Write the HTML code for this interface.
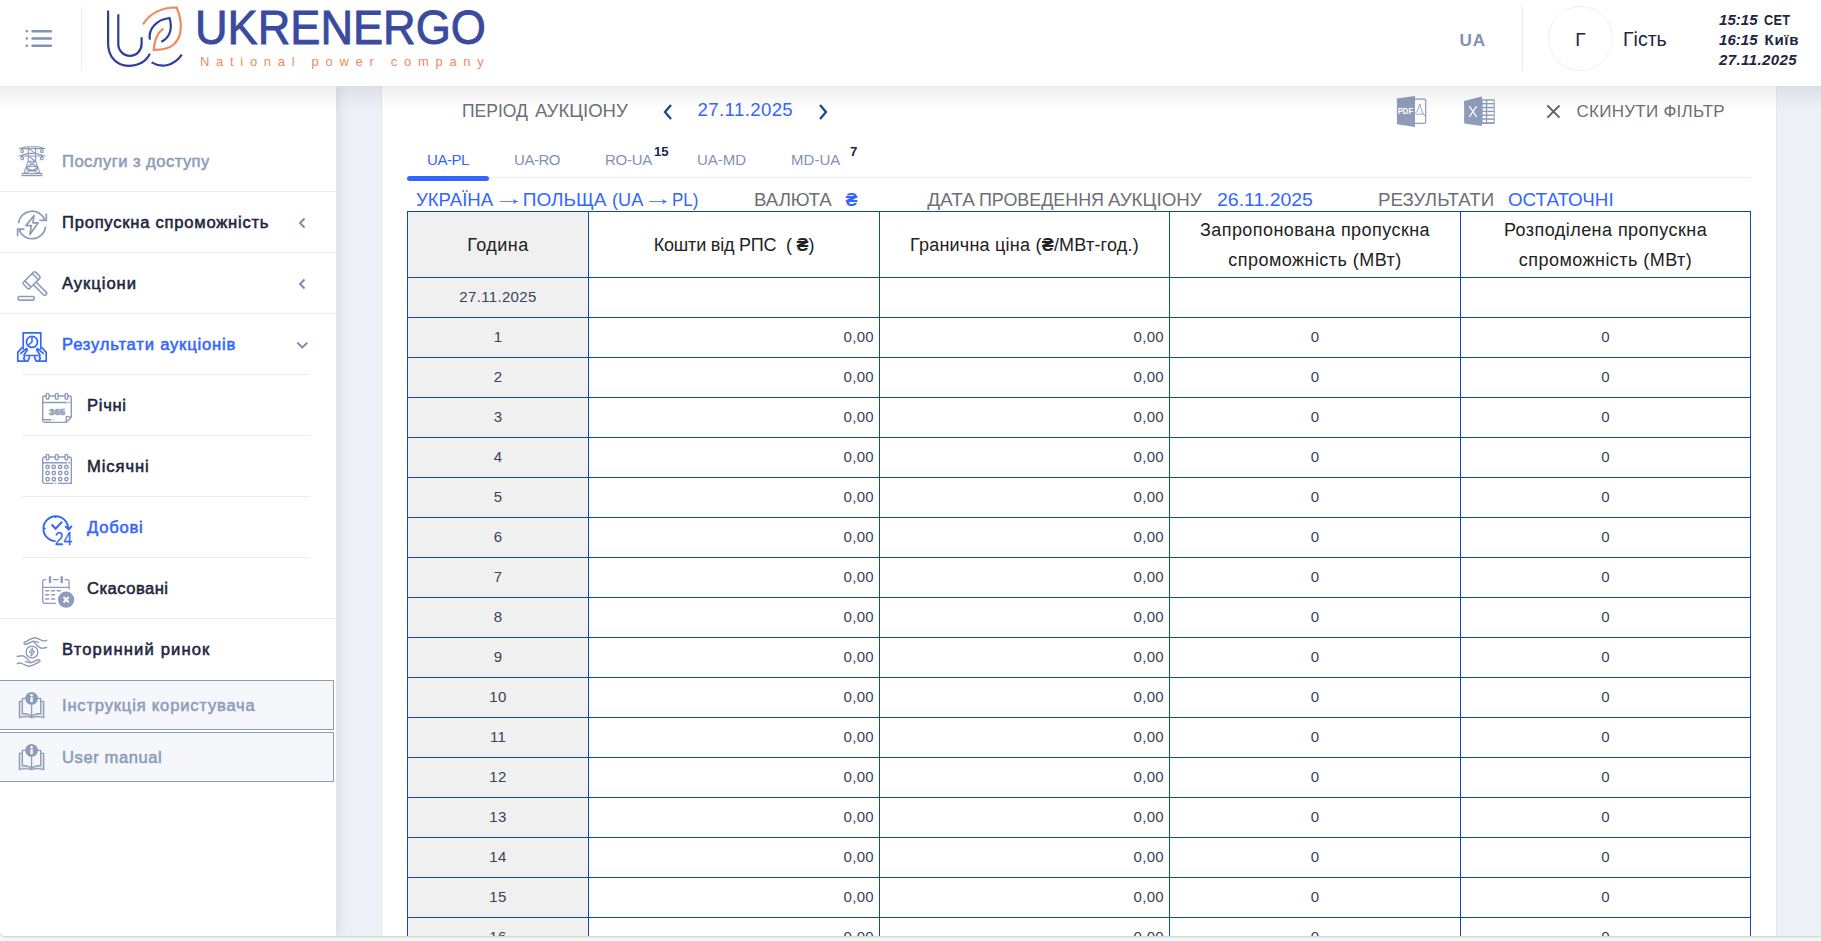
<!DOCTYPE html>
<html lang="uk">
<head>
<meta charset="utf-8">
<title>Результати аукціонів</title>
<style>
*{box-sizing:border-box;margin:0;padding:0}
html,body{width:1821px;height:941px;overflow:hidden}
body{background:#f5f5f5;font-family:"Liberation Sans",sans-serif;color:#1e2640;position:relative}
.abs{position:absolute;white-space:nowrap}
/* header */
.header{position:absolute;left:0;top:0;width:1821px;height:86px;background:#fff;z-index:5;box-shadow:none}
.hsep{position:absolute;width:1px;background:#e9ecf4}
.brand{position:absolute;left:195px;top:0px;font-size:49px;line-height:54px;color:#3a4a9f;letter-spacing:0;-webkit-text-stroke:.9px #3a4a9f;transform:scaleX(.921);transform-origin:0 0}
.brand2{position:absolute;left:200px;top:54px;font-size:13px;line-height:16px;color:#f08a5d;letter-spacing:6.7px}
.lang{position:absolute;left:1459.6px;top:29px;font-size:17.2px;line-height:22px;font-weight:bold;color:#8392b3;letter-spacing:.7px}
.avatar{position:absolute;left:1548px;top:6px;width:65px;height:65px;border-radius:50%;border:1px solid #edf0f8;text-align:center;line-height:65px;font-size:19px;color:#1e2640}
.guest{position:absolute;left:1623px;top:27px;font-size:19.5px;line-height:24px;color:#1e2640}
.clock{position:absolute;left:1719px;font-size:15px;line-height:18px;font-weight:bold;color:#1e2640;letter-spacing:.35px;margin-top:1px}
.clock i{font-style:italic;letter-spacing:.05px;margin-right:-.5px}
/* sidebar */
.sidebar{position:absolute;left:0;top:86px;width:336px;height:850px;background:#fff;z-index:3;box-shadow:3px 0 10px rgba(40,50,80,.10)}
.mi{position:absolute;left:62px;font-size:16.6px;line-height:22px;font-weight:normal;-webkit-text-stroke:.55px currentColor;letter-spacing:.75px;color:#1e2640;white-space:nowrap;margin-top:1px}
.mi.sub{left:87px}
.mi.muted{color:#8e9cba}
.mi.blue{color:#3366ff}
.sep{position:absolute;height:1px;background:#e9edf5}
.box{position:absolute;left:-1px;width:335px;height:50px;background:#f5f7fa;border:1px solid #8e9cba}
.ico{position:absolute;overflow:visible}
/* card */
.card{position:absolute;left:381px;top:86px;width:1396px;height:850px;background:#fff;border-left:1px solid #e3e7f1;border-right:1px solid #e3e7f1;z-index:1}
.topshadow{position:absolute;left:0;top:86px;width:1821px;height:26px;z-index:4;background:linear-gradient(to bottom,rgba(45,50,65,.09),rgba(45,50,65,.03) 55%,rgba(45,50,65,0));pointer-events:none}
.flt{position:absolute;font-size:18.6px;line-height:24px;color:#6d6f76;white-space:nowrap}
.tab{position:absolute;top:150px;font-size:15px;line-height:20px;color:#8392b3;white-space:nowrap}
.badge{position:absolute;font-size:13.2px;line-height:14px;font-weight:bold;color:#1e2640}
.info{position:absolute;top:188px;font-size:19px;line-height:24px;color:#6d6f76;white-space:nowrap;transform-origin:0 50%}
.info.b{color:#3366ff}
table.t{position:absolute;left:407px;top:211px;border-collapse:collapse;table-layout:fixed;width:1344px;z-index:2}
table.t td,table.t th{border:1px solid #0c4aad;height:40px;font-size:15px;letter-spacing:.33px;color:#3a4256;font-weight:normal;text-align:center;vertical-align:middle;padding:0}
table.t th{height:66px;font-size:18px;letter-spacing:.45px;line-height:30px;color:#222}
table.t td{padding-bottom:1.5px}
table.t td.r{text-align:right;padding-right:5px}
table.t .g{background:#f0f0f0}
#page{position:absolute;left:0;top:0;width:1821px;height:936px;overflow:hidden;background:#edf0f7;border-radius:0 0 2px 5px;box-shadow:0 .5px 2px rgba(0,0,0,.17)}
</style>
</head>
<body>
<div id="page">
<div class="header">
  <svg class="ico" style="left:24px;top:28px" width="30" height="22" viewBox="0 0 30 22"><g stroke="#8392b3" stroke-width="2.6" stroke-linecap="round" fill="none"><path d="M2.8 3.2h.1M8.6 3.2h18.2M2.8 10.5h.1M8.6 10.5h18.2M2.8 17.8h.1M8.6 17.8h18.2"/></g></svg>
  <div class="hsep" style="left:81px;top:7px;height:63px"></div>
  <svg class="ico" style="left:100px;top:0" width="90" height="76" viewBox="100 0 90 76" fill="none" stroke-width="2.2" stroke-linecap="butt">
    <path d="M108.1 10.4V43.500C108.1 56.500 116.500 65.800 128.400 65.800C138 65.800 146 61.500 149.900 53.800" stroke="#2f3f99"/>
    <path d="M118.3 14.3V44a11.6 11.8 0 0 0 23.3 0V37.3" stroke="#2f3f99"/>
    <path d="M151.6 62.4c10 6 22.5 3.6 30.2-7.7" stroke="#2f3f99"/>
    <path d="M149.9 39.6c-2-10.5 6.5-20 19.6-21.6c2.6 8.5 2 19-8.2 23.8" stroke="#2f3f99"/>
    <path d="M142.9 24.3c7-10.5 19-17 33.8-16.8c5 12 7 28-3 37c-5.5 4.6-12.5 5.6-20 5.4c.5-8 3-16.500 9.600-21.3" stroke="#f08a5d"/>
  </svg>
  <div class="brand">UKRENERGO</div>
  <div class="brand2">National power company</div>
  <div class="lang">UA</div>
  <div class="hsep" style="left:1522px;top:6px;height:65px"></div>
  <div class="avatar">Г</div>
  <div class="guest">Гість</div>
  <div class="clock" style="top:10px"><i>15:15</i>&nbsp; <span style="display:inline-block;transform:scaleX(.85);transform-origin:0 50%;margin-left:-1.7px">CET</span></div>
  <div class="clock" style="top:30px"><i>16:15</i>&nbsp; <span style="letter-spacing:.75px;margin-left:-1.700px">Київ</span></div>
  <div class="clock" style="top:50px"><i style="letter-spacing:.4px">27.11.2025</i></div>
</div>
<div class="topshadow"></div>

<div class="sidebar" id="sidebar">
<div class="mi muted" style="top:64px;letter-spacing:0.45px">Послуги з доступу</div>
<div class="mi" style="top:125px;letter-spacing:0.75px">Пропускна спроможність</div>
<div class="mi" style="top:186px;letter-spacing:0.95px">Аукціони</div>
<div class="mi blue" style="top:247px;letter-spacing:0.8px">Результати аукціонів</div>
<div class="mi sub" style="top:308px;letter-spacing:0.7px">Річні</div>
<div class="mi sub" style="top:369px;letter-spacing:0.9px">Місячні</div>
<div class="mi sub blue" style="top:430px;letter-spacing:0.75px">Добові</div>
<div class="mi sub" style="top:491px;letter-spacing:0.47px">Скасовані</div>
<div class="mi" style="top:552px;letter-spacing:1.15px">Вторинний ринок</div>
<div class="sep" style="left:0;top:105px;width:336px"></div>
<div class="sep" style="left:0;top:166px;width:336px"></div>
<div class="sep" style="left:0;top:227px;width:336px"></div>
<div class="sep" style="left:22px;top:288px;width:288px"></div>
<div class="sep" style="left:22px;top:349px;width:288px"></div>
<div class="sep" style="left:22px;top:410px;width:288px"></div>
<div class="sep" style="left:22px;top:471px;width:288px"></div>
<div class="sep" style="left:0;top:532px;width:336px"></div>
<div class="box" style="top:594px"></div>
<div class="box" style="top:646px"></div>
<div class="mi muted" style="top:608px;letter-spacing:.8px">Інструкція користувача</div>
<div class="mi muted" style="top:660px;letter-spacing:.57px">User manual</div>
<svg class="ico" style="left:296px;top:130.6px" width="12" height="12" viewBox="0 0 12 12"><path d="M8.5 1.500L4 6l4.500 4.500" fill="none" stroke="#7587ad" stroke-width="1.800"/></svg>
<svg class="ico" style="left:296px;top:191.6px" width="12" height="12" viewBox="0 0 12 12"><path d="M8.5 1.500L4 6l4.500 4.500" fill="none" stroke="#7587ad" stroke-width="1.800"/></svg>
<svg class="ico" style="left:296px;top:253px" width="13" height="12" viewBox="0 0 13 12"><path d="M1.300 3.700L6.300 8.500l5-4.800" fill="none" stroke="#7587ad" stroke-width="1.800"/></svg>
<!--ICONS--><!--/ICONS-->
</div>

<!--SIDEICONS--><svg class="ico" style="left:0;top:0;z-index:4" width="336" height="941" viewBox="0 0 336 941"><g fill="none" stroke="#8e9cba" stroke-width="1.1" stroke-linejoin="round">
<path d="M26.5 146.7H38.4M28.2 146.7V161.3L23.8 173.6M35.6 146.7V161.3L40.2 173.6"/>
<path d="M26.5 146.8L19.7 148.6H44.8L38.4 146.800M28.2 153.400L19.2 156H44.8L35.6 153.400"/>
<path d="M22.2 148.6V150M41.8 148.6V150M22.2 156V157.400M41.8 156V157.400"/>
<rect x="21" y="150" width="2.400" height="2.400" rx=".7"/><rect x="40.6" y="150" width="2.400" height="2.400" rx=".7"/>
<rect x="21" y="157.4" width="2.400" height="2.400" rx=".7"/><rect x="40.6" y="157.4" width="2.400" height="2.400" rx=".7"/>
<path d="M28.2 148.6L35.6 153.400H28.2M28.200 156L35.6 161.300H28.200M28.200 161.300L38.4 167.800M35.6 161.300L25.8 167.800M25.8 167.800Q32 164.600 38.400 167.800M25.800 167.800L40 173.400M38.400 167.800L24 173.400M26.500 169.500Q32 172.500 37.600 169.500"/>
<rect x="22.2" y="173.6" width="19.600" height="2" />
</g>
<g fill="none" stroke="#8e9cba" stroke-width="1.7" stroke-linejoin="miter">
<path d="M18.400 223.300A13.700 13.700 0 0 1 44.900 220.300"/>
<path d="M46.3 213.5V220.400H39.200"/>
<path d="M45.600 226.600A13.700 13.700 0 0 1 18.900 229.100"/>
<path d="M17.600 236.200V229.200H24.500"/>
<path d="M34.100 215.600L25.800 225.600H31.300L29.900 234.500L38.200 222.800H32.900Z" stroke-linejoin="round"/>
</g>
<g fill="none" stroke="#8e9cba" stroke-width="1.6">
<g transform="translate(31.600 280.300) rotate(-45)"><rect x="-8.600" y="-4.400" width="17.200" height="8.800" rx="1.800"/><path d="M-5.200 -4.400V4.400M5.200 -4.400V4.400"/></g>
<g transform="translate(34.700 283.400) rotate(45)"><path d="M0 -1.900H14.200A1.900 1.900 0 0 1 14.200 1.900H0"/></g>
<rect x="18.100" y="296.500" width="16.100" height="3.600" rx="1"/>
</g>
<g fill="none" stroke="#3366ff" stroke-width="1.7" stroke-linejoin="round" stroke-linecap="round">
<path d="M23.200 349.500V332.800H40.800V349.500M25.500 355.500H38.500" stroke-linecap="butt"/>
<circle cx="32" cy="341.900" r="5.500"/>
<path d="M32 337.800V341.900L28.900 344.800" stroke-width="1.500"/>
<path d="M22.400 347.200L17.800 352.400V361.200H27.800L29.800 356.400" stroke-linecap="butt"/>
<path d="M20.800 353.400L26 348.900Q27.200 348.300 27.300 349.800L24 355L24.600 356.800L23.600 358.400L24.800 360"/>
<path d="M41.600 347.200L46.200 352.400V361.200H36.200L34.200 356.400" stroke-linecap="butt"/>
<path d="M43.200 353.400L38 348.900Q36.800 348.300 36.700 349.800L40 355L39.400 356.800L40.400 358.400L39.200 360"/>
</g>
<g fill="none" stroke="#8e9cba" stroke-width="1.4" stroke-linejoin="round">
<path d="M44.500 396H69.500A1.800 1.800 0 0 1 71.300 397.800V417.300L66.200 422.400H44.500A1.800 1.800 0 0 1 42.700 420.600V397.800A1.800 1.800 0 0 1 44.500 396Z"/>
<path d="M43 402.500H67M68.200 402.500H69.800M66.200 422.400V417.600Q66.200 416.400 67.400 416.400L71.300 417.300M43 419.600H51.500M53.300 419.600H54"/>
<path d="M43.400 421.100H51" stroke="#c9cfde" stroke-width="1.600"/>
<g fill="#fff"><rect x="46.200" y="393.400" width="2.800" height="6" rx="1.400"/><rect x="55.400" y="393.400" width="2.800" height="6" rx="1.400"/><rect x="65" y="393.400" width="2.800" height="6" rx="1.400"/></g>
</g>
<text x="57.100" y="414.600" text-anchor="middle" font-family="Liberation Sans,sans-serif" font-weight="bold" font-size="9.2" fill="#8e9cba" stroke="#8e9cba" stroke-width=".55" textLength="16.200" lengthAdjust="spacingAndGlyphs">365</text>
<g fill="none" stroke="#8e9cba" stroke-width="1.400" stroke-linejoin="round">
<path d="M58 483.400H71.300V458.800A1.800 1.800 0 0 0 69.500 457H44.500A1.800 1.800 0 0 0 42.700 458.800V481.600A1.800 1.800 0 0 0 44.500 483.400H53.500M55 483.400H56.500"/>
<path d="M43 462.800H67M68.200 462.800H69.800"/>
<g fill="#fff"><rect x="46.200" y="454.400" width="2.800" height="5.600" rx="1.400"/><rect x="55.400" y="454.400" width="2.800" height="5.600" rx="1.400"/><rect x="65" y="454.400" width="2.800" height="5.600" rx="1.400"/></g>
<g stroke-width="1.450"><circle cx="47.6" cy="466.9" r="1.700"/><circle cx="53.8" cy="466.9" r="1.700"/><circle cx="60.2" cy="466.9" r="1.700"/><circle cx="66.4" cy="466.9" r="1.700"/><circle cx="47.6" cy="473" r="1.700"/><circle cx="53.8" cy="473" r="1.700"/><circle cx="60.2" cy="473" r="1.700"/><circle cx="66.4" cy="473" r="1.700"/><circle cx="47.6" cy="479.2" r="1.700"/><circle cx="53.8" cy="479.2" r="1.700"/><circle cx="60.2" cy="479.2" r="1.700"/><circle cx="66.4" cy="479.2" r="1.700"/></g>
</g>
<g fill="none" stroke="#3366ff" stroke-width="1.900" stroke-linecap="butt">
<path d="M55.600 541.100A12.400 12.400 0 1 1 68.200 528.500"/>
<path d="M65.200 526.200L68.600 529.600L71.800 526" />
<path d="M55.500 516.500V518M43.200 528.500H45.800" stroke-width="1.500"/>
<path d="M51.600 524.500L55.600 528.800L62.200 521.600" stroke-width="2.100"/>
</g>
<text x="54.700" y="544.600" font-family="Liberation Sans,sans-serif" font-size="18.2" fill="#3366ff" stroke="#3366ff" stroke-width=".25" textLength="17.400" lengthAdjust="spacingAndGlyphs">24</text>
<g fill="none" stroke="#8e9cba" stroke-width="1.300" stroke-linecap="round">
<path d="M45.600 579.700H44.800A2.100 2.100 0 0 0 42.700 581.800V601.200A2.100 2.100 0 0 0 44.800 603.300H55.800M53.500 579.700H58.200M65.200 579.700H67A2.100 2.100 0 0 1 69.100 581.800V589.200M42.700 587.400H69.100"/>
<path d="M50 577.300V582M61.700 577.300V582" stroke-width="2.400"/>
<path d="M45.600 590.700H48.600M51.500 590.700H54.600M57.200 590.700H60.300M45.600 594.800H48.600M51.500 594.800H54.600M45.600 599H48.600M51.500 599H54.600" stroke-width="1.400"/>
</g>
<circle cx="66.100" cy="599.700" r="8.100" fill="#8e9cba"/>
<path d="M63.500 597L68.700 602.400M68.700 597L63.500 602.400" stroke="#fff" stroke-width="2" fill="none"/>
<g fill="none" stroke="#8e9cba" stroke-width="1.400" stroke-linecap="round" stroke-linejoin="round">
<path d="M46.700 640.300C45.500 641 44.500 641.200 43.300 640.900C40 639.800 37.500 637.700 35 637.700C32 637.700 28 640.500 24.800 642C23.700 642.600 23.800 643.800 24.600 644.200C25.300 644.500 26 644.200 26.500 644L33.300 641.100L38.600 642.400M33.300 641.400C35 643 36.500 645 38 646.200C39.500 647.500 40.500 648.200 41.800 648.200C43.500 648.200 45 647.900 46.700 647.500"/><g transform="rotate(180 32 652)"><path d="M46.700 640.300C45.500 641 44.500 641.200 43.300 640.900C40 639.800 37.500 637.700 35 637.700C32 637.700 28 640.500 24.800 642C23.700 642.600 23.800 643.800 24.600 644.200C25.300 644.500 26 644.200 26.500 644L33.300 641.100L38.600 642.400M33.300 641.400C35 643 36.500 645 38 646.200C39.500 647.500 40.500 648.200 41.800 648.200C43.500 648.200 45 647.900 46.700 647.500"/></g>
<circle cx="32" cy="652" r="5.900"/>
<path d="M32.600 648L29.200 652.300H31.700L31 656.200L34.600 651.400H32.200Z" stroke-width="1.100"/>
</g>
<g transform="translate(0 0)"><path d="M19.400 701.400H22.400V713.500C26 713.700 29.500 714.400 31.600 716.200C33.700 714.400 37.200 713.700 40.700 713.500V701.400H43.700V717.700C39.500 716.300 35.500 716.200 31.600 717.700C27.700 716.200 23.700 716.300 19.400 717.700Z" fill="#dde1ea" stroke="none"/>
<g fill="none" stroke="#8e9cba" stroke-width="1.300" stroke-linejoin="round"><path d="M26 698.400H22.400V713.500C26 713.700 29.500 714.400 31.600 716.200C33.700 714.400 37.200 713.700 40.700 713.500V698.400H37.200M31.600 704.500V717"/>
<path d="M22.400 701.400H19.400V717.700C23.700 716.300 27.700 716.200 31.600 717.700C35.500 716.200 39.500 716.300 43.700 717.700V701.400H40.700"/></g>
<circle cx="31.600" cy="698.400" r="6.400" fill="#8e9cba"/>
<circle cx="31.600" cy="695.200" r="1.250" fill="#fff"/><rect x="30.450" y="697.300" width="2.300" height="4.800" fill="#fff"/></g>
<g transform="translate(0 52)"><path d="M19.400 701.400H22.400V713.500C26 713.700 29.500 714.400 31.600 716.200C33.700 714.400 37.200 713.700 40.700 713.500V701.400H43.700V717.700C39.500 716.300 35.500 716.200 31.600 717.700C27.700 716.200 23.700 716.300 19.400 717.700Z" fill="#dde1ea" stroke="none"/>
<g fill="none" stroke="#8e9cba" stroke-width="1.300" stroke-linejoin="round"><path d="M26 698.400H22.400V713.500C26 713.700 29.500 714.400 31.600 716.200C33.700 714.400 37.200 713.700 40.700 713.500V698.400H37.200M31.600 704.500V717"/>
<path d="M22.400 701.400H19.400V717.700C23.700 716.300 27.700 716.200 31.600 717.700C35.500 716.200 39.500 716.300 43.700 717.700V701.400H40.700"/></g>
<circle cx="31.600" cy="698.400" r="6.400" fill="#8e9cba"/>
<circle cx="31.600" cy="695.200" r="1.250" fill="#fff"/><rect x="30.450" y="697.300" width="2.300" height="4.800" fill="#fff"/></g></svg><!--/SIDEICONS-->
<div class="card"></div>
<div id="main" style="position:absolute;left:0;top:0;z-index:2">
<div class="flt" style="left:461.8px;top:98.6px;transform:scaleX(.94);transform-origin:0 50%">ПЕРІОД</div>
<div class="flt" style="left:535px;top:98.6px;transform:scaleX(1.0);transform-origin:0 50%">АУКЦІОНУ</div>
<div class="flt" style="left:697.6px;top:97.7px;color:#3366ff;letter-spacing:.38px">27.11.2025</div>
<svg class="ico" style="left:661px;top:103px" width="14" height="18" viewBox="0 0 14 18"><path d="M10 2L4 9l6 7" fill="none" stroke="#0f4a9c" stroke-width="2.300"/></svg>
<svg class="ico" style="left:816px;top:103px" width="14" height="18" viewBox="0 0 14 18"><path d="M4 2l6 7l-6 7" fill="none" stroke="#0f4a9c" stroke-width="2.300"/></svg>
<svg class="ico" style="left:1546px;top:104px" width="15" height="15" viewBox="0 0 15 15"><path d="M1.400 1.500l12.100 12.100M13.500 1.500l-12.100 12.100" fill="none" stroke="#606060" stroke-width="1.800"/></svg>
<div class="flt" style="left:1576.6px;top:100px;font-size:17px;letter-spacing:.25px">СКИНУТИ ФІЛЬТР</div>
<!--FILEICONS--><svg class="ico" style="left:1390px;top:90px" width="110" height="40" viewBox="1390 90 110 40"><path d="M1396.900 98.500L1415 95.900V126.900L1396.900 124.200Z" fill="#8e9cba"/>
<path d="M1415 99.100H1424.200A1.500 1.500 0 0 1 1425.700 100.600V121.800A1.500 1.500 0 0 1 1424.200 123.300H1415" fill="#fff" stroke="#8e9cba" stroke-width="1.200"/>
<path d="M1415.400 113.800C1417.500 111 1419 107 1419.500 104.800C1419.300 103.800 1420.300 103.600 1420.300 104.800C1420.300 107.500 1422.500 114 1425.500 116.700M1416.200 114.600C1418.500 113.800 1421.500 113.800 1423.500 114.500" fill="none" stroke="#8e9cba" stroke-width=".9"/>
<text x="1397.700" y="114.100" font-family="Liberation Sans,sans-serif" font-weight="bold" font-size="8.200" fill="#fff" textLength="15.400" lengthAdjust="spacingAndGlyphs">PDF</text>
<rect x="1481" y="99.300" width="13.700" height="24.600" rx="1" fill="#8e9cba"/><g fill="#fff"><rect x="1482.600" y="100.6" width="3.300" height="2.400"/><rect x="1487.200" y="100.6" width="6.500" height="2.400"/><rect x="1482.600" y="104.4" width="3.300" height="2.400"/><rect x="1487.200" y="104.4" width="6.500" height="2.400"/><rect x="1482.600" y="108.3" width="3.300" height="2.400"/><rect x="1487.200" y="108.3" width="6.500" height="2.400"/><rect x="1482.600" y="112.1" width="3.300" height="2.400"/><rect x="1487.200" y="112.1" width="6.500" height="2.400"/><rect x="1482.600" y="115.9" width="3.300" height="2.400"/><rect x="1487.200" y="115.9" width="6.500" height="2.400"/><rect x="1482.600" y="119.8" width="3.300" height="2.400"/><rect x="1487.200" y="119.8" width="6.500" height="2.400"/></g>
<path d="M1464.100 100.900L1481.900 96.600V126.100L1464.100 123.600Z" fill="#8e9cba"/>
<path d="M1469.300 106.200L1476.600 117M1476.600 106.200L1469.300 117" stroke="#fff" stroke-width="1.300" fill="none"/></svg><!--/FILEICONS-->
<div class="tab" style="left:427px;color:#3366ff;letter-spacing:-0.45px">UA-PL</div>
<div class="tab" style="left:514px;letter-spacing:-0.45px">UA-RO</div>
<div class="tab" style="left:605px;letter-spacing:-0.25px">RO-UA</div>
<div class="tab" style="left:697px;letter-spacing:-0.05px">UA-MD</div>
<div class="tab" style="left:791px;letter-spacing:0.05px">MD-UA</div>
<div class="badge" style="left:654px;top:145px">15</div>
<div class="badge" style="left:850px;top:145px">7</div>
<div class="abs" style="left:407px;top:177px;width:1344px;height:1px;background:#e9edf5"></div>
<div class="abs" style="left:407px;top:176px;width:82px;height:5px;border-radius:2.5px;background:#3366ff"></div>
<div class="info b" style="left:416.3px;transform:scaleX(0.977)">УКРАЇНА</div>
<div class="info b" style="left:493.6px;transform:scaleX(1.57);margin-top:-1px">→</div>
<div class="info b" style="left:522.8px;transform:scaleX(1.0)">ПОЛЬЩА</div>
<div class="info b" style="left:612px;transform:scaleX(0.955)">(UA</div>
<div class="info b" style="left:642.5px;transform:scaleX(1.57);margin-top:-1px">→</div>
<div class="info b" style="left:671.6px;transform:scaleX(0.893)">PL)</div>
<div class="info" style="left:754.2px;transform:scaleX(0.98)">ВАЛЮТА</div>
<div class="info" style="left:927.2px;transform:scaleX(1.0)">ДАТА</div>
<div class="info" style="left:979.4px;transform:scaleX(0.942)">ПРОВЕДЕННЯ</div>
<div class="info" style="left:1108.4px;transform:scaleX(0.988)">АУКЦІОНУ</div>
<div class="info b" style="left:1217.2px;transform:scaleX(1.024)">26.11.2025</div>
<div class="info" style="left:1377.8px;transform:scaleX(0.984)">РЕЗУЛЬТАТИ</div>
<div class="info b" style="left:1508.2px;transform:scaleX(0.989)">ОСТАТОЧНІ</div>
<div class="info b" style="left:845.6px;font-weight:bold;font-size:18px">₴</div>
<table class="t"><colgroup><col style="width:181px"><col style="width:291px"><col style="width:290px"><col style="width:291px"><col style="width:290px"></colgroup>
<tr><th class="g">Година</th><th style="letter-spacing:-.2px">Кошти від РПС&nbsp; ( <b>₴</b>)</th><th style="letter-spacing:.22px">Гранична ціна (<b>₴</b>/МВт-год.)</th><th>Запропонована пропускна<br>спроможність (МВт)</th><th>Розподілена пропускна<br>спроможність (МВт)</th></tr>
<tr><td class="g">27.11.2025</td><td></td><td></td><td></td><td></td></tr>
<tr><td class="g">1</td><td class="r">0,00</td><td class="r">0,00</td><td>0</td><td>0</td></tr>
<tr><td class="g">2</td><td class="r">0,00</td><td class="r">0,00</td><td>0</td><td>0</td></tr>
<tr><td class="g">3</td><td class="r">0,00</td><td class="r">0,00</td><td>0</td><td>0</td></tr>
<tr><td class="g">4</td><td class="r">0,00</td><td class="r">0,00</td><td>0</td><td>0</td></tr>
<tr><td class="g">5</td><td class="r">0,00</td><td class="r">0,00</td><td>0</td><td>0</td></tr>
<tr><td class="g">6</td><td class="r">0,00</td><td class="r">0,00</td><td>0</td><td>0</td></tr>
<tr><td class="g">7</td><td class="r">0,00</td><td class="r">0,00</td><td>0</td><td>0</td></tr>
<tr><td class="g">8</td><td class="r">0,00</td><td class="r">0,00</td><td>0</td><td>0</td></tr>
<tr><td class="g">9</td><td class="r">0,00</td><td class="r">0,00</td><td>0</td><td>0</td></tr>
<tr><td class="g">10</td><td class="r">0,00</td><td class="r">0,00</td><td>0</td><td>0</td></tr>
<tr><td class="g">11</td><td class="r">0,00</td><td class="r">0,00</td><td>0</td><td>0</td></tr>
<tr><td class="g">12</td><td class="r">0,00</td><td class="r">0,00</td><td>0</td><td>0</td></tr>
<tr><td class="g">13</td><td class="r">0,00</td><td class="r">0,00</td><td>0</td><td>0</td></tr>
<tr><td class="g">14</td><td class="r">0,00</td><td class="r">0,00</td><td>0</td><td>0</td></tr>
<tr><td class="g">15</td><td class="r">0,00</td><td class="r">0,00</td><td>0</td><td>0</td></tr>
<tr><td class="g">16</td><td class="r">0,00</td><td class="r">0,00</td><td>0</td><td>0</td></tr></table>
</div>
</div>
</body>
</html>
